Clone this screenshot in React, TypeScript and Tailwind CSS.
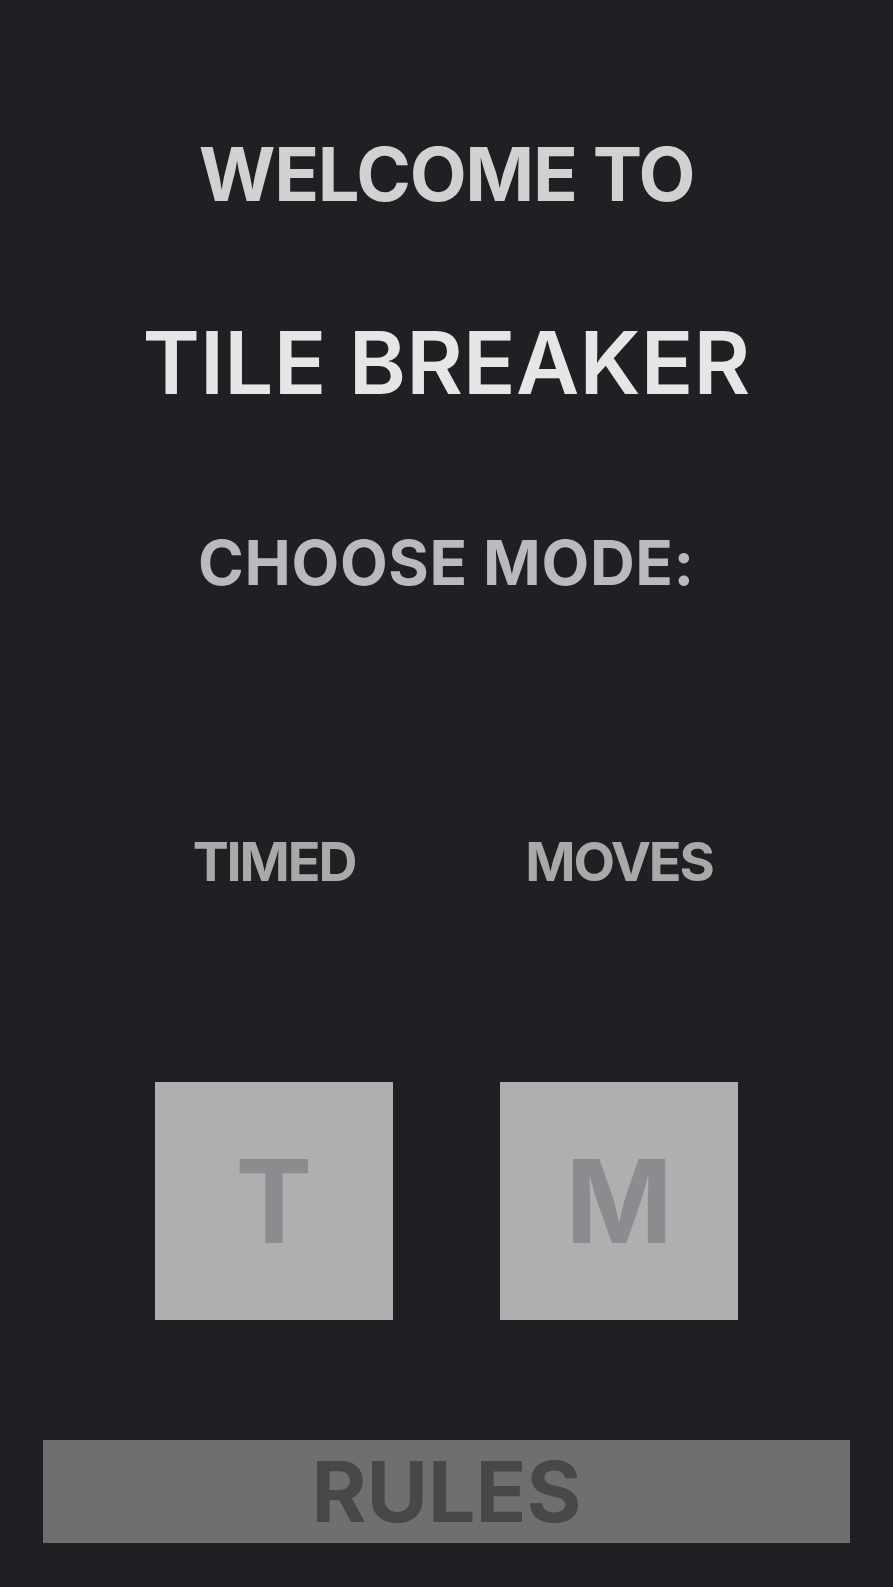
import React from "react";

const modes = [
  { label: "TIMED", letter: "T" },
  { label: "MOVES", letter: "M" },
];

const App: React.FC = () => {
  return (
    <div
      className="min-h-screen w-full bg-[#1f2023] flex flex-col items-center"
      style={{ fontFamily: "Inter, 'Liberation Sans', sans-serif" }}
    >
      {/* Title */}
      <h1 className="mt-[137px] text-[74px] leading-none font-bold tracking-[-0.018em] text-[#d0d1d1]">
        WELCOME TO
      </h1>
      <h1 className="mt-[108px] text-[87px] leading-none font-semibold tracking-[0.002em] text-[#e6e6e6]">
        TILE BREAKER
      </h1>
      <h2 className="mt-[126px] text-[62px] leading-none font-bold tracking-[0.01em] text-[#b8babb]">
        CHOOSE MODE:
      </h2>

      {/* Mode picker */}
      <div className="mt-[241px] flex gap-[107px]">
        {modes.map((mode) => (
          <div key={mode.label} className="flex flex-col items-center w-[238px]">
            <span className="text-[54px] leading-none font-bold tracking-[-0.04em] text-[#a8a9a9]">
              {mode.label}
            </span>
            <button className="mt-[193px] w-[238px] h-[238px] bg-[#afafaf] flex items-center justify-center text-[115px] leading-none font-bold text-[#8c8b8f]">
              {mode.letter}
            </button>
          </div>
        ))}
      </div>

      <button className="mt-[120px] w-[807px] h-[103px] bg-[#6f6f6f] flex items-center justify-center text-[84px] leading-none font-bold text-[#48484a]">
        RULES
      </button>
    </div>
  );
};

export default App;
